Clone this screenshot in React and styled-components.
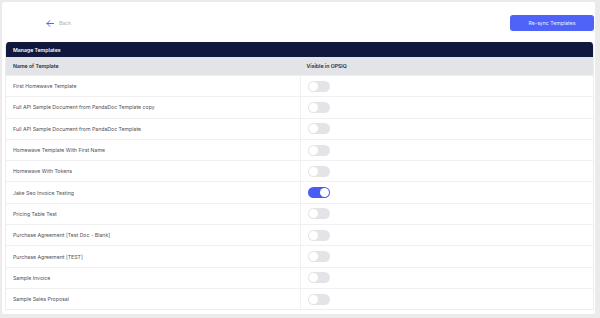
import React, { useState } from 'react';
import styled, { createGlobalStyle } from 'styled-components';

const GlobalStyle = createGlobalStyle`
  body {
    margin: 0;
    background: #ebebeb;
    font-family: Inter, "Noto Sans", sans-serif;
  }
`;

const templates = [
  { name: 'First Homewave Template', visible: false },
  { name: 'Full API Sample Document from PandaDoc Template copy', visible: false },
  { name: 'Full API Sample Document from PandaDoc Template', visible: false },
  { name: 'Homewave Template With First Name', visible: false },
  { name: 'Homewave With Tokens', visible: false },
  { name: 'Jake Seo Invoice Testing', visible: true },
  { name: 'Pricing Table Test', visible: false },
  { name: 'Purchase Agreement [Test Doc - Blank]', visible: false },
  { name: 'Purchase Agreement [TEST]', visible: false },
  { name: 'Sample Invoice', visible: false },
  { name: 'Sample Sales Proposal', visible: false },
];

const App = () => {
  const [items, setItems] = useState(templates);

  // 토글 상태 변경
  const handleToggle = (index) => {
    setItems(items.map((item, i) => (i === index ? { ...item, visible: !item.visible } : item)));
  };

  return (
    <>
      <GlobalStyle />
      <Card>
        <TopBar>
          <BackLink>
            <svg width="8" height="7" viewBox="0 0 8 7" fill="none">
              <path d="M7.5 3.5H1M3.8 0.7L1 3.5l2.8 2.8" stroke="#4f63f9" strokeWidth="1" strokeLinecap="round" strokeLinejoin="round" />
            </svg>
            <span>Back</span>
          </BackLink>
          <SyncButton>Re-sync Templates</SyncButton>
        </TopBar>
        <Table>
          <TableTitle>Manage Templates</TableTitle>
          <HeadRow>
            <HeadCell>Name of Template</HeadCell>
            <HeadCell $divided>Visible in OPSIQ</HeadCell>
          </HeadRow>
          {items.map((item, i) => (
            <Row key={item.name}>
              <Cell>{item.name}</Cell>
              <Cell $divided>
                <Toggle $on={item.visible} onClick={() => handleToggle(i)} />
              </Cell>
            </Row>
          ))}
        </Table>
      </Card>
    </>
  );
};

export default App;

const Card = styled.div`
  margin: 2px 5px 0 2px;
  height: 312px;
  box-sizing: border-box;
  background: #ffffff;
  border-radius: 2px;
  padding: 0 1px 0 3px;
  display: flex;
  flex-direction: column;
`;

const TopBar = styled.div`
  height: 40px;
  display: flex;
  align-items: center;
  justify-content: space-between;
  padding-left: 41px;
`;

const BackLink = styled.div`
  display: flex;
  align-items: center;
  gap: 5px;
  margin-top: 2px;
  color: #b0b2b9;
  font-size: 5.2px;
  cursor: pointer;
`;

const SyncButton = styled.button`
  width: 84px;
  height: 16px;
  margin-top: 2px;
  border: none;
  border-radius: 3px;
  background: #4f63f9;
  color: #eef0ff;
  font-family: Inter, sans-serif;
  font-size: 5.2px;
  padding: 0;
  cursor: pointer;
`;

const Table = styled.div`
  border: 1px solid #ededf0;
  border-top: none;
  border-radius: 4px 4px 0 0;
  overflow: hidden;
`;

const TableTitle = styled.div`
  height: 15px;
  display: flex;
  align-items: center;
  padding-left: 7px;
  background: #11183d;
  color: #ffffff;
  font-size: 5.2px;
  font-weight: 600;
`;

const HeadRow = styled.div`
  display: grid;
  grid-template-columns: 1fr 1fr;
  height: 18px;
  background: #e3e4e8;
`;

const HeadCell = styled.div`
  display: flex;
  align-items: center;
  padding-left: 7px;
  color: #2a2d38;
  font-size: 5.2px;
  font-weight: 600;
`;

const Row = styled.div`
  display: grid;
  grid-template-columns: 1fr 1fr;
  height: 21.3px;
  border-top: 1px solid #f0f0f2;
  box-sizing: border-box;
`;

const Cell = styled.div`
  display: flex;
  align-items: center;
  padding-left: 7px;
  color: #50525b;
  font-size: 5.2px;
  border-left: ${(p) => (p.$divided ? '1px solid #f0f0f2' : 'none')};
`;

const Toggle = styled.div`
  position: relative;
  width: 22px;
  height: 11px;
  border-radius: 6px;
  background: ${(p) => (p.$on ? '#4a5cf2' : '#e3e4e8')};
  cursor: pointer;

  &::after {
    content: '';
    position: absolute;
    top: 1px;
    left: ${(p) => (p.$on ? '12px' : '1px')};
    width: 9px;
    height: 9px;
    border-radius: 50%;
    background: #ffffff;
  }
`;
